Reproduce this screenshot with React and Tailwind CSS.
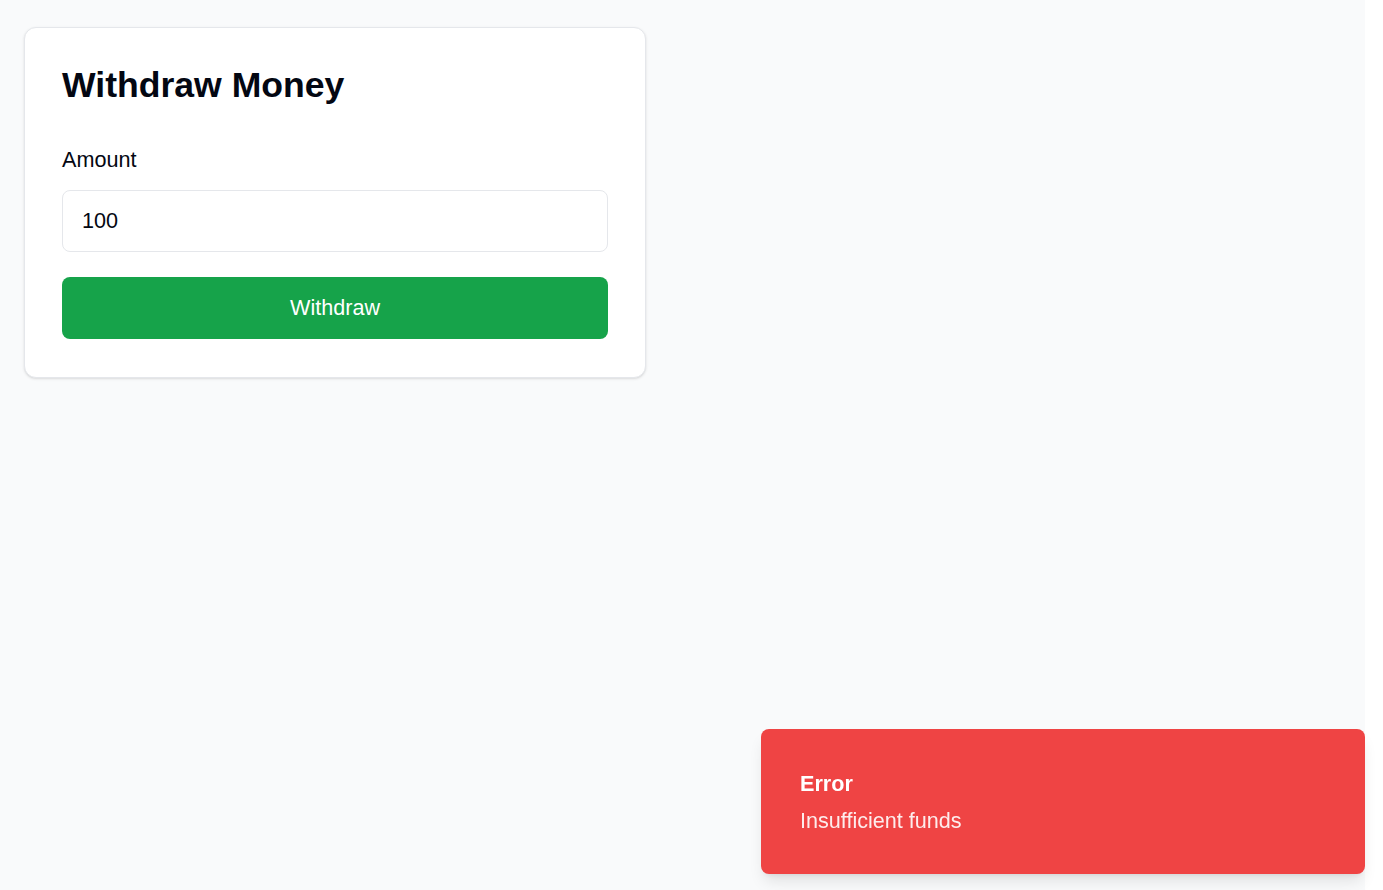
export default function App() {
  return (
    <div
      className="w-[1365px] min-h-[890px] bg-gray-50 pt-[27px] pl-[24px]"
      style={{ fontFamily: '"Liberation Sans", Arial, sans-serif' }}
    >
      <div className="w-[622px] rounded-xl border border-gray-200 bg-white px-[37px] pt-[37px] pb-[38px] shadow-sm">
        <h1 className="text-[35.6px] font-bold leading-[40px] text-gray-950">
          Withdraw Money
        </h1>
        <label className="mt-[39px] block text-[21.6px] leading-[32.4px] text-gray-950">
          Amount
        </label>
        <div className="mt-[14px] flex h-[62px] items-center rounded-lg border border-gray-200 bg-white px-[19px] text-[21.6px] text-gray-950">
          100
        </div>
        <button className="mt-[25px] flex h-[62px] w-full items-center justify-center rounded-lg bg-[#16a34a] text-[21.6px] text-white">
          Withdraw
        </button>
      </div>

      <div className="fixed bottom-[16px] right-[18px] w-[604px] rounded-lg bg-[#ef4444] px-[39px] pt-[39px] pb-[37px] shadow-lg">
        <div className="text-[21.6px] font-bold leading-[32.4px] text-white">Error</div>
        <div className="mt-[4px] text-[21.6px] leading-[32.4px] text-white/90">
          Insufficient funds
        </div>
      </div>
    </div>
  );
}
